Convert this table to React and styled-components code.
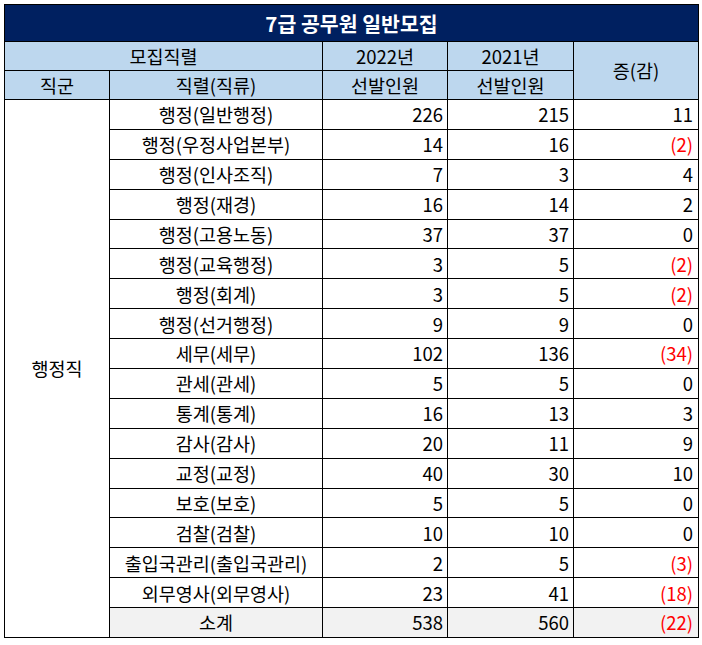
import React from 'react';
import styled, { createGlobalStyle } from 'styled-components';

const GlobalStyle = createGlobalStyle`
  html, body {
    margin: 0;
    padding: 0;
    background: #ffffff;
  }
  body {
    font-family: 'Noto Sans CJK KR', 'Noto Sans', sans-serif;
  }
`;

const Page = styled.div`
  padding: 4px;
  width: 694px;
`;

const Table = styled.table`
  width: 694px;
  table-layout: fixed;
  border-collapse: collapse;
  border: 1px solid #000;
  font-size: 18.5px;
  line-height: 1.2;
  color: #000;
`;

const TitleCell = styled.th`
  height: 36px;
  padding: 0;
  background: #002060;
  color: #ffffff;
  font-size: 20.5px;
  font-weight: 700;
  text-align: center;
  border: 1px solid #000;
`;

const HeadCell = styled.th`
  height: 28px;
  padding: 0;
  background: #bdd7ee;
  font-weight: 400;
  text-align: center;
  border: 1px solid #000;
`;

const Row = styled.tr`
  height: 29.9px;
  background: ${(p) => (p.$total ? '#f2f2f2' : '#ffffff')};
`;

const GroupCell = styled.td`
  padding: 0;
  background: #ffffff;
  text-align: center;
  vertical-align: middle;
  border: 1px solid #000;
`;

const NameCell = styled.td`
  padding: 0;
  text-align: center;
  border: 1px solid #000;
  white-space: nowrap;
`;

const NumCell = styled.td`
  padding: 0 ${(p) => (p.$last ? '5px' : '4px')} 0 0;
  text-align: right;
  border: 1px solid #000;
  color: ${(p) => (p.$neg ? '#ff0000' : '#000')};
`;

const rows = [
  ['행정(일반행정)', 226, 215],
  ['행정(우정사업본부)', 14, 16],
  ['행정(인사조직)', 7, 3],
  ['행정(재경)', 16, 14],
  ['행정(고용노동)', 37, 37],
  ['행정(교육행정)', 3, 5],
  ['행정(회계)', 3, 5],
  ['행정(선거행정)', 9, 9],
  ['세무(세무)', 102, 136],
  ['관세(관세)', 5, 5],
  ['통계(통계)', 16, 13],
  ['감사(감사)', 20, 11],
  ['교정(교정)', 40, 30],
  ['보호(보호)', 5, 5],
  ['검찰(검찰)', 10, 10],
  ['출입국관리(출입국관리)', 2, 5],
  ['외무영사(외무영사)', 23, 41],
];

const fmt = (n) => (n < 0 ? `(${-n})` : `${n}`);

export default function App() {
  const total2022 = rows.reduce((s, r) => s + r[1], 0);
  const total2021 = rows.reduce((s, r) => s + r[2], 0);
  const all = [...rows, ['소계', total2022, total2021, true]];

  return (
    <>
      <GlobalStyle />
      <Page>
        <Table>
          <colgroup>
            <col style={{ width: 105 }} />
            <col style={{ width: 213 }} />
            <col style={{ width: 125 }} />
            <col style={{ width: 126 }} />
            <col style={{ width: 125 }} />
          </colgroup>
          <thead>
            <tr>
              <TitleCell colSpan={5}>7급 공무원 일반모집</TitleCell>
            </tr>
            <tr>
              <HeadCell colSpan={2}>모집직렬</HeadCell>
              <HeadCell>2022년</HeadCell>
              <HeadCell>2021년</HeadCell>
              <HeadCell rowSpan={2}>증(감)</HeadCell>
            </tr>
            <tr>
              <HeadCell>직군</HeadCell>
              <HeadCell>직렬(직류)</HeadCell>
              <HeadCell>선발인원</HeadCell>
              <HeadCell>선발인원</HeadCell>
            </tr>
          </thead>
          <tbody>
            {all.map(([name, a, b, total], i) => {
              const diff = a - b;
              return (
                <Row key={name} $total={total}>
                  {i === 0 && <GroupCell rowSpan={all.length}>행정직</GroupCell>}
                  <NameCell>{name}</NameCell>
                  <NumCell>{a}</NumCell>
                  <NumCell>{b}</NumCell>
                  <NumCell $last $neg={diff < 0}>{fmt(diff)}</NumCell>
                </Row>
              );
            })}
          </tbody>
        </Table>
      </Page>
    </>
  );
}
